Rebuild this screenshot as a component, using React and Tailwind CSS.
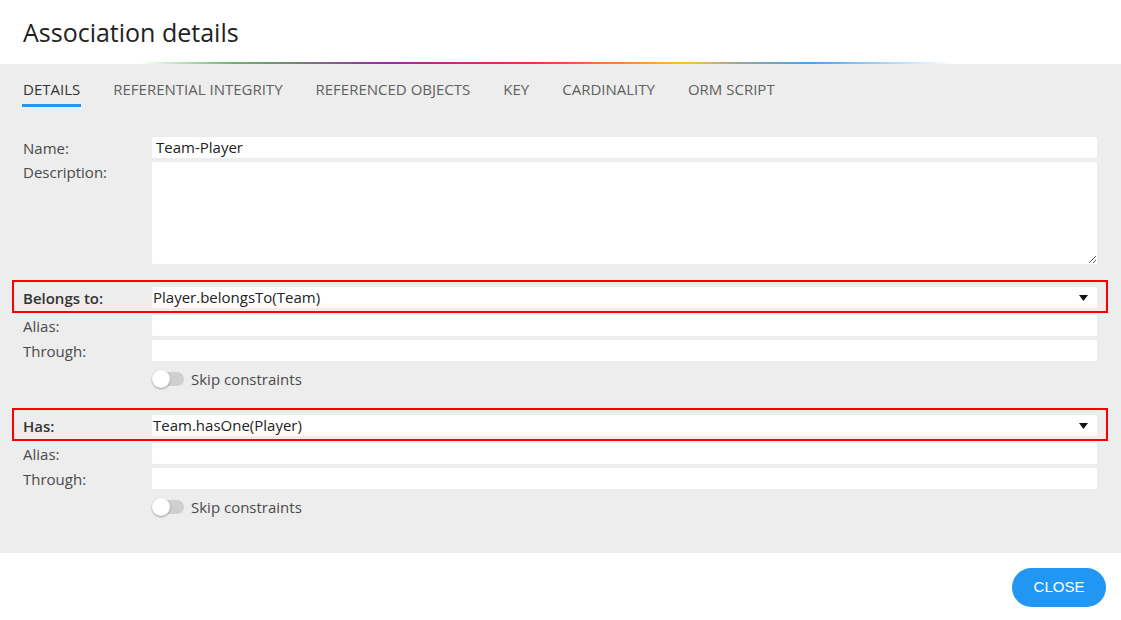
import React from 'react';

const tabs = ['Details', 'Referential integrity', 'Referenced objects', 'Key', 'Cardinality', 'ORM script'];

function Field({ label, value = '', className = '' }) {
  return (
    <div className={`grid grid-cols-[129px_1fr] items-center ${className}`}>
      <span className="text-[15px] leading-5 text-[#4a4a4a]">{label}</span>
      <input
        readOnly
        value={value}
        className="h-[21px] w-full rounded-[2px] bg-white px-[4px] text-[15px] text-[#222] outline-none"
      />
    </div>
  );
}

function Relation({ label, value }) {
  return (
    <div className="-mx-[11px] grid grid-cols-[129px_1fr] items-center border-2 border-[#ff0000] px-[9px] pt-[5px] pb-[3px]">
      <span className="text-[15px] font-semibold leading-5 text-[#333]">{label}</span>
      <div className="flex h-[21px] items-center justify-between rounded-[2px] bg-white pl-[1px] pr-[9px] text-[15px] text-[#222]">
        <span>{value}</span>
        <svg width="9" height="6" viewBox="0 0 9 6">
          <path d="M0 0h9L4.5 6z" fill="#111" />
        </svg>
      </div>
    </div>
  );
}

function Toggle({ label }) {
  return (
    <div className="grid grid-cols-[129px_1fr] items-center">
      <span />
      <div className="flex items-center gap-[7px]">
        <div className="relative h-[14px] w-[32px] rounded-full bg-[#cfcfcf]">
          {/* knob */}
          <div className="absolute -top-[2px] left-0 h-[18px] w-[18px] rounded-full bg-white shadow-[0_1px_2px_rgba(0,0,0,0.35)]" />
        </div>
        <span className="text-[15px] leading-5 text-[#4a4a4a]">{label}</span>
      </div>
    </div>
  );
}

export default function App() {
  return (
    <div className="flex h-[620px] w-[1121px] flex-col bg-white font-['Open_Sans',sans-serif]">
      {/* Header */}
      <div className="flex h-[62px] items-center px-[23px] pt-[2px]">
        <h1 className="text-[25px] leading-8 text-[#222]">Association details</h1>
      </div>
      <div className="h-[2px] bg-[linear-gradient(90deg,transparent_12.5%,#66bb6a_20.7%,#7a7a7a_27.2%,#9c27b0_34.3%,#f0343a_47.8%,#ff7b3a_54.3%,#ffc233_61.3%,#9aa6a0_66%,#42a5f5_72.3%,transparent_85%)]" />

      {/* Body */}
      <div className="bg-[#ededed] pl-[23px] pr-[24px] pb-[36px]">
        <div className="flex gap-[33px] pt-[15px]">
          {tabs.map((t, i) => (
            <div
              key={t}
              className={`-mx-[1px] border-b-[3px] px-[1px] pb-[5px] text-[15px] uppercase leading-5 ${
                i === 0 ? 'border-[#2196f3] text-[#333]' : 'border-transparent text-[#606060]'
              }`}
            >
              {t}
            </div>
          ))}
        </div>

        <div className="mt-[30px] flex flex-col">
          <Field label="Name:" value="Team-Player" />
          <div className="mt-[4px] grid grid-cols-[129px_1fr] items-start">
            <span className="text-[15px] leading-5 text-[#4a4a4a]">Description:</span>
            <textarea
              readOnly
              className="h-[102px] w-full rounded-[2px] bg-white px-[4px] text-[15px] outline-none"
            />
          </div>

          <div className="mt-[16px]">
            <Relation label="Belongs to:" value="Player.belongsTo(Team)" />
          </div>
          <Field label="Alias:" className="mt-[2px]" />
          <Field label="Through:" className="mt-[4px]" />
          <div className="mt-[8px]">
            <Toggle label="Skip constraints" />
          </div>

          <div className="mt-[19px]">
            <Relation label="Has:" value="Team.hasOne(Player)" />
          </div>
          <Field label="Alias:" className="mt-[2px]" />
          <Field label="Through:" className="mt-[4px]" />
          <div className="mt-[8px]">
            <Toggle label="Skip constraints" />
          </div>
        </div>
      </div>

      {/* Footer */}
      <div className="flex justify-end pt-[15px] pr-[15px]">
        <button className="h-[39px] w-[94px] rounded-full bg-[#2196f3] font-['Liberation_Sans',Arial,sans-serif] text-[15px] text-white">
          CLOSE
        </button>
      </div>
    </div>
  );
}
